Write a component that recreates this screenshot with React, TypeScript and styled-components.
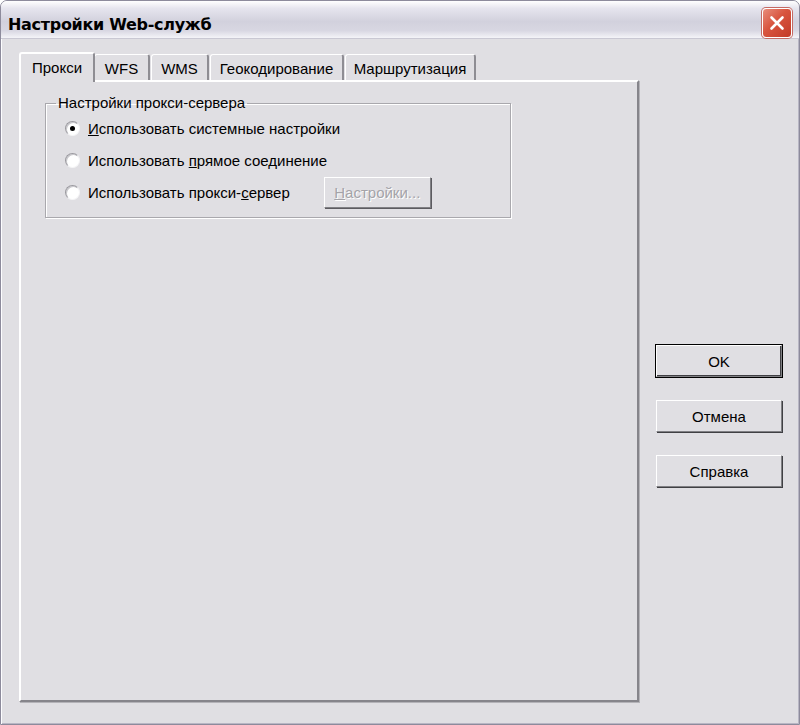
import { FC, ReactNode } from 'react'
import styled, { createGlobalStyle, css } from 'styled-components'

const GlobalStyle = createGlobalStyle`
  html, body {
    margin: 0;
    padding: 0;
    background: #ffffff;
  }
  body {
    font-family: 'Liberation Sans', Arial, sans-serif;
    font-size: 15px;
    color: #000;
  }
`

const Window = styled.div`
  box-sizing: border-box;
  width: 800px;
  height: 725px;
  display: flex;
  flex-direction: column;
  background: #e0dfe3;
  border: 1px solid #8d8b9c;
  border-radius: 7px 7px 0 0;
  box-shadow: inset 1px 1px 0 #fdfdff, inset -1px -1px 0 #b8b6c4;
  overflow: hidden;
`

const TitleBar = styled.div`
  box-sizing: border-box;
  height: 38px;
  flex: none;
  display: flex;
  align-items: flex-end;
  justify-content: space-between;
  padding: 0 7px 0 7px;
  background: linear-gradient(
    to bottom,
    #ffffff 0%,
    #e6e5ee 20%,
    #d2d1dd 55%,
    #d8d7e2 80%,
    #f4f4f8 100%
  );
  border-bottom: 1px solid #c9c8d3;
`

const Title = styled.span`
  font-family: 'DejaVu Sans', Verdana, sans-serif;
  font-weight: bold;
  font-size: 16px;
  letter-spacing: -0.3px;
  color: #000;
  padding-bottom: 4px;
`

const CloseButton = styled.div`
  width: 28px;
  height: 28px;
  border-radius: 4px;
  border: 1px solid #ffffff;
  box-shadow: 0 0 0 1px #c46a64;
  background: linear-gradient(135deg, #e88d7c 0%, #d8543e 45%, #c23a27 100%);
  display: flex;
  align-items: center;
  justify-content: center;
`

const Body = styled.div`
  flex: 1;
  display: flex;
  padding: 12px 16px 22px 18px;
  gap: 17px;
`

const TabArea = styled.div`
  width: 620px;
  display: flex;
  flex-direction: column;
`

const TabStrip = styled.div`
  display: flex;
  align-items: flex-end;
  height: 29px;
  padding-left: 2px;
`

const Tab = styled.div<{ $active?: boolean; $w: number }>`
  box-sizing: border-box;
  width: ${p => p.$w}px;
  height: 26px;
  display: flex;
  align-items: center;
  justify-content: center;
  font-size: 15px;
  background: #e0dfe3;
  border-top: 1px solid #ffffff;
  border-left: 1px solid #ffffff;
  border-right: 2px solid #8e8d93;
  border-radius: 3px 3px 0 0;
  margin-right: 1px;
  padding-top: 1px;
  ${p =>
    p.$active &&
    css`
      position: relative;
      z-index: 1;
      height: 30px;
      margin-left: -2px;
      margin-right: -1px;
      margin-bottom: -2px;
      padding-bottom: 3px;
      border-top: 2px solid #ffffff;
      border-left: 2px solid #ffffff;
    `}
`

const Panel = styled.div`
  flex: 1;
  box-sizing: border-box;
  border-top: 2px solid #ffffff;
  border-left: 2px solid #ffffff;
  border-right: 2px solid #86858b;
  border-bottom: 2px solid #86858b;
  box-shadow: 1px 1px 0 #b4b3b8;
  padding: 0 0 0 24px;
`

const Group = styled.fieldset`
  box-sizing: border-box;
  width: 466px;
  height: 124px;
  margin: 12px 0 0 0;
  padding: 0 0 0 19px;
  border: 1px solid #a9a8ad;
  box-shadow: 1px 1px 0 #ffffff, inset 1px 1px 0 #ffffff;
`

const Legend = styled.legend`
  padding: 0 2px;
  margin-left: -9px;
  font-size: 15px;
  line-height: 18px;
`

const Row = styled.label`
  height: 32px;
  display: flex;
  align-items: center;
  white-space: nowrap;
`

const Radio = styled.span<{ $checked?: boolean }>`
  box-sizing: border-box;
  width: 15px;
  height: 15px;
  margin-right: 8px;
  border-radius: 50%;
  background: #ffffff;
  border: 1px solid;
  border-color: #9a999f #f4f4f6 #f4f4f6 #9a999f;
  box-shadow: inset 1px 1px 0 #c9c8cd;
  display: flex;
  align-items: center;
  justify-content: center;
  &::after {
    content: '';
    width: 5px;
    height: 5px;
    border-radius: 50%;
    background: #000;
    display: ${p => (p.$checked ? 'block' : 'none')};
  }
`

const SmallButton = styled.button`
  box-sizing: border-box;
  width: 107px;
  height: 31px;
  margin-left: 34px;
  font-family: 'Liberation Sans', Arial, sans-serif;
  font-size: 15px;
  color: #a4a3a8;
  text-shadow: 1px 1px 0 #ffffff;
  background: #e0dfe3;
  border: 1px solid;
  border-color: #ffffff #808084 #808084 #ffffff;
  box-shadow: 1px 1px 0 #5c5b60;
  padding: 0;
`

const ButtonColumn = styled.div`
  display: flex;
  flex-direction: column;
  gap: 23px;
  padding-top: 294px;
`

const DialogButton = styled.button<{ $default?: boolean }>`
  box-sizing: border-box;
  width: 126px;
  height: 32px;
  font-family: 'Liberation Sans', Arial, sans-serif;
  font-size: 15px;
  color: #000;
  background: #e0dfe3;
  border: 1px solid;
  border-color: #ffffff #808084 #808084 #ffffff;
  box-shadow: 1px 1px 0 #404044;
  padding: 0;
  ${p =>
    p.$default &&
    css`
      outline: 1px solid #000;
      outline-offset: 0;
      box-shadow: inset -1px -1px 0 #404044;
    `}
`

const Accel: FC<{ children: ReactNode }> = ({ children }) => <u>{children}</u>

const tabs = [
  { label: 'Прокси', w: 76, active: true },
  { label: 'WFS', w: 56 },
  { label: 'WMS', w: 58 },
  { label: 'Геокодирование', w: 134 },
  { label: 'Маршрутизация', w: 131 },
]

const App: FC = () => {
  return (
    <>
      <GlobalStyle />
      <Window>
        <TitleBar>
          <Title>Настройки Web-служб</Title>
          <CloseButton>
            <svg width='16' height='16' viewBox='0 0 16 16'>
              <path
                d='M2.5 2.5 L13.5 13.5 M13.5 2.5 L2.5 13.5'
                stroke='#ffffff'
                strokeWidth='2.6'
                strokeLinecap='round'
              />
            </svg>
          </CloseButton>
        </TitleBar>
        <Body>
          <TabArea>
            <TabStrip>
              {tabs.map(t => (
                <Tab key={t.label} $w={t.w} $active={t.active}>
                  {t.label}
                </Tab>
              ))}
            </TabStrip>
            <Panel>
              <Group>
                <Legend>Настройки прокси-сервера</Legend>
                <Row>
                  <Radio $checked />
                  <span>
                    <Accel>И</Accel>спользовать системные настройки
                  </span>
                </Row>
                <Row>
                  <Radio />
                  <span>
                    Использовать <Accel>п</Accel>рямое соединение
                  </span>
                </Row>
                <Row>
                  <Radio />
                  <span>
                    Использовать прокси-<Accel>с</Accel>ервер
                  </span>
                  <SmallButton disabled>
                    <Accel>Н</Accel>астройки...
                  </SmallButton>
                </Row>
              </Group>
            </Panel>
          </TabArea>
          <ButtonColumn>
            <DialogButton $default>OK</DialogButton>
            <DialogButton>Отмена</DialogButton>
            <DialogButton>Справка</DialogButton>
          </ButtonColumn>
        </Body>
      </Window>
    </>
  )
}

export default App
